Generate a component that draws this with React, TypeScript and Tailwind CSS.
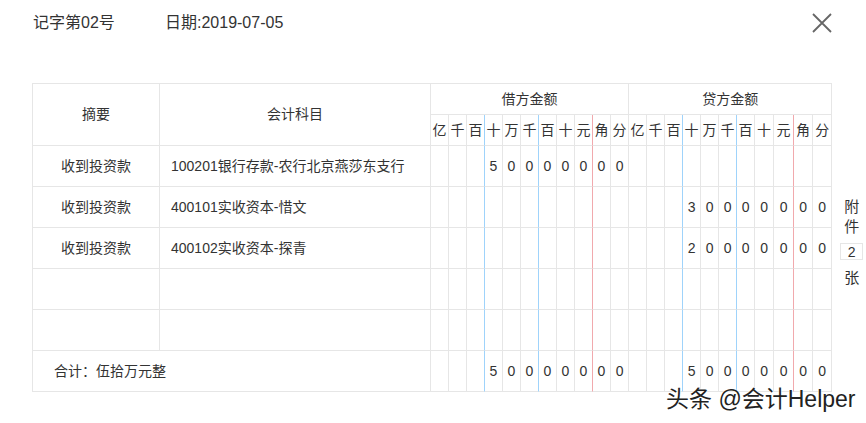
import React from 'react';

const units = ['亿', '千', '百', '十', '万', '千', '百', '十', '元', '角', '分'];

// column widths for the 22 digit columns (debit + credit)
const digitCols = [
  'w-[18px]', 'w-[18px]', 'w-[18px]', 'w-[18px]', 'w-[18px]', 'w-[18px]', 'w-[18px]', 'w-[18px]', 'w-[18px]', 'w-[18px]', 'w-[18px]',
  'w-[18px]', 'w-[18px]', 'w-[18px]', 'w-[18px]', 'w-[18px]', 'w-[18px]', 'w-[18px]', 'w-[19px]', 'w-[20px]', 'w-[19px]', 'w-[19px]',
];

// right border colour of each digit cell inside one 11-column group
const edge = (i: number) => {
  if (i === 2 || i === 5) return 'border-r-[#9fd3fb]';
  if (i === 8) return 'border-r-[#f1a9ad]';
  return 'border-r-[#e6e6e6]';
};

const amount = (v?: string) => {
  const cells: string[] = Array(11).fill('');
  if (v) {
    const s = v.split('');
    for (let k = 0; k < s.length; k++) cells[11 - s.length + k] = s[k];
  }
  return cells;
};

const rows = [
  { summary: '收到投资款', subject: '100201银行存款-农行北京燕莎东支行', debit: '50000000', credit: '' },
  { summary: '收到投资款', subject: '400101实收资本-惜文', debit: '', credit: '30000000' },
  { summary: '收到投资款', subject: '400102实收资本-探青', debit: '', credit: '20000000' },
  { summary: '', subject: '', debit: '', credit: '' },
  { summary: '', subject: '', debit: '', credit: '' },
];

const cell = 'border-r border-b border-b-[#e6e6e6] p-0';

function AmountGroup({ v, side }: { v?: string; side: string }) {
  return (
    <>
      {amount(v).map((d, i) => (
        <td key={side + i} className={`${cell} ${edge(i)} text-center`}>
          {d}
        </td>
      ))}
    </>
  );
}

export default function App() {
  return (
    <div
      className="relative w-[866px] h-[423px] bg-white text-[#333] overflow-hidden"
      style={{ fontFamily: '"Liberation Sans", "Noto Sans CJK SC", sans-serif' }}
    >
      {/* top bar */}
      <div className="flex items-center h-[46px] pl-[33px] text-[16px]">
        <span className="w-[132px]">记字第02号</span>
        <span>日期:2019-07-05</span>
        <svg className="ml-auto mr-[34px]" width="20" height="20" viewBox="0 0 20 20">
          <path d="M1 1L19 19M19 1L1 19" stroke="#666" strokeWidth="1.8" fill="none" />
        </svg>
      </div>

      <div className="flex items-start mt-[37px] pl-[32px]">
        <table className="table-fixed w-[800px] border-separate border-spacing-0 border-l border-t border-[#e6e6e6] text-[14px]">
          <colgroup>
            <col className="w-[127px]" />
            <col className="w-[271px]" />
            {digitCols.map((w, i) => (
              <col key={i} className={w} />
            ))}
          </colgroup>
          <thead>
            <tr className="h-[31px]">
              <th rowSpan={2} className={`${cell} border-r-[#e6e6e6] font-normal`}>摘要</th>
              <th rowSpan={2} className={`${cell} border-r-[#e6e6e6] font-normal`}>会计科目</th>
              <th colSpan={11} className={`${cell} border-r-[#e6e6e6] font-normal`}>借方金额</th>
              <th colSpan={11} className={`${cell} border-r-[#e6e6e6] font-normal`}>贷方金额</th>
            </tr>
            <tr className="h-[31px]">
              {units.concat(units).map((u, i) => (
                <th key={i} className={`${cell} ${edge(i % 11)} font-normal`}>{u}</th>
              ))}
            </tr>
          </thead>
          <tbody>
            {rows.map((r, idx) => (
              <tr key={idx} className="h-[41px]">
                <td className={`${cell} border-r-[#e6e6e6] text-center`}>{r.summary}</td>
                <td className={`${cell} border-r-[#e6e6e6] pl-[11px]`}>{r.subject}</td>
                <AmountGroup v={r.debit} side="d" />
                <AmountGroup v={r.credit} side="c" />
              </tr>
            ))}
            <tr className="h-[41px]">
              <td colSpan={2} className={`${cell} border-r-[#e6e6e6] pl-[21px]`}>合计：伍拾万元整</td>
              <AmountGroup v="50000000" side="d" />
              <AmountGroup v="50000000" side="c" />
            </tr>
          </tbody>
        </table>

        {/* attachments */}
        <div className="flex flex-col items-center w-[23px] ml-[8px] mt-[114px] text-[15px] leading-[20px]">
          <span>附</span>
          <span>件</span>
          <span className="mt-[6px] w-[23px] h-[17px] border border-[#e6e6e6] flex items-center justify-center text-[14px] leading-none">
            2
          </span>
          <span className="mt-[8px]">张</span>
        </div>
      </div>

      {/* watermark */}
      <div
        className="absolute left-[666px] top-[382px] text-[23px] text-[#222] whitespace-nowrap"
        style={{ textShadow: '0 0 2px #fff, 0 0 1px #fff' }}
      >
        头条 @会计Helper
      </div>
    </div>
  );
}
